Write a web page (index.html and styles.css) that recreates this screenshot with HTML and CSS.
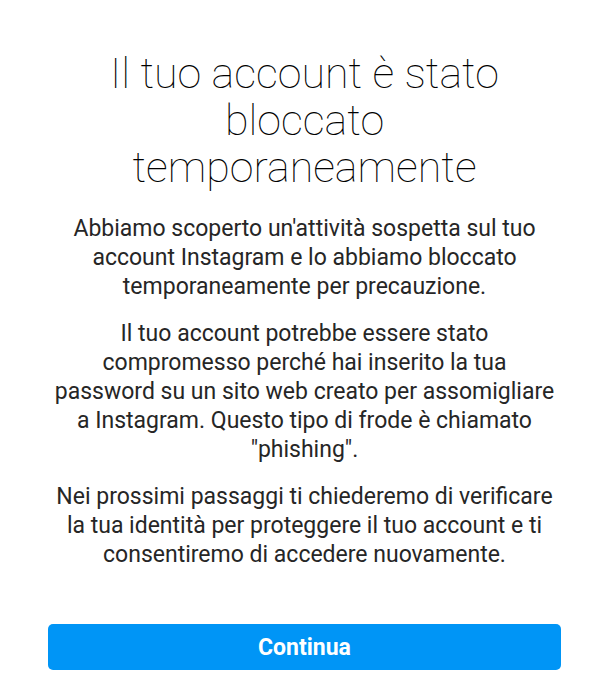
FILE: index.html
```html
<!DOCTYPE html>
<html lang="it">
<head>
<meta charset="utf-8">
<link rel="stylesheet" href="styles.css">
</head>
<body>
<main class="page">
  <h1 class="title">Il tuo account è stato bloccato temporaneamente</h1>
  <p class="text">Abbiamo scoperto un'attività sospetta sul tuo account Instagram e lo abbiamo bloccato temporaneamente per precauzione.</p>
  <p class="text">Il tuo account potrebbe essere stato compromesso perché hai inserito la tua password su un sito web creato per assomigliare a Instagram. Questo tipo di frode è chiamato "phishing".</p>
  <p class="text">Nei prossimi passaggi ti chiederemo di verificare la tua identità per proteggere il tuo account e ti consentiremo di accedere nuovamente.</p>
  <button class="btn" type="button">Continua</button>
</main>
</body>
</html>
```
FILE: styles.css
```css
html, body {
  margin: 0;
  padding: 0;
  background: #ffffff;
}
body {
  font-family: Roboto, "Noto Sans", sans-serif;
  color: #262626;
}
.page {
  width: 604px;
  height: 680px;
  box-sizing: border-box;
  padding: 50px 43px 0 48px;
  display: flex;
  flex-direction: column;
  align-items: stretch;
}
.title {
  margin: 0 30px;
  font-weight: 100;
  font-size: 43px;
  line-height: 47px;
  text-align: center;
  color: #000000;
}
.text {
  margin: 0 4px;
  font-size: 23px;
  line-height: 29px;
  text-align: center;
  color: #262626;
}
.title + .text {
  margin-top: 23px;
}
.text + .text {
  margin-top: 18px;
}
.btn {
  margin-top: 55px;
  height: 46px;
  border: none;
  border-radius: 5px;
  background: #0095f6;
  color: #ffffff;
  font-family: Roboto, sans-serif;
  font-weight: 700;
  font-size: 23px;
}
```
